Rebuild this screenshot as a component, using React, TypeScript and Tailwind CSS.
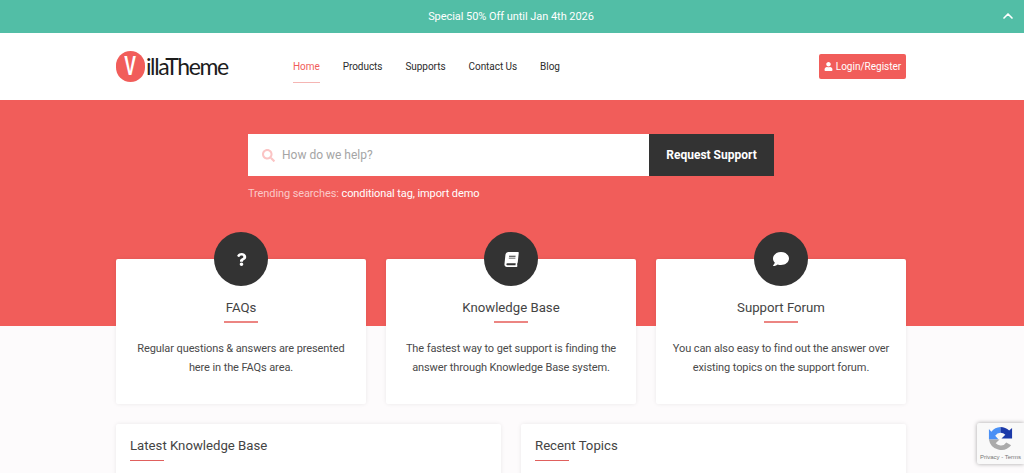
import React from 'react'
import { ChevronUp } from 'lucide-react'
import { FaBook, FaComment, FaQuestion, FaSearch, FaUser } from 'react-icons/fa'

const navItems = ['Home', 'Products', 'Supports', 'Contact Us', 'Blog']

const supportCards = [
  {
    title: 'FAQs',
    icon: <FaQuestion className="h-[13px] w-[13px]" />,
    lines: ['Regular questions & answers are presented', 'here in the FAQs area.'],
  },
  {
    title: 'Knowledge Base',
    icon: <FaBook className="h-[15px] w-[15px] -skew-x-6" />,
    lines: ['The fastest way to get support is finding the', 'answer through Knowledge Base system.'],
  },
  {
    title: 'Support Forum',
    icon: <FaComment className="h-[16px] w-[16px]" />,
    lines: ['You can also easy to find out the answer over', 'existing topics on the support forum.'],
  },
]

function App() {
  return (
    <div className="relative h-[473px] overflow-hidden bg-[#fdfbfc] font-['Roboto',sans-serif] text-[#3a3a3a]">
      <div className="relative flex h-[33px] items-center justify-center bg-[#52bea6] pr-[2px] pt-px text-[11px] tracking-[-0.05px] text-white">
        <span>Special 50% Off until Jan 4th 2026</span>
        <ChevronUp strokeWidth={2.5} className="absolute right-[8px] top-[8px] h-[16px] w-[16px]" />
      </div>

      <header className="flex h-[67px] items-center bg-white pl-[116px] pr-[118px]">
        <div className="flex w-[177px] items-center">
          <div className="flex h-[31px] w-[29px] items-center justify-center rounded-full bg-[#f15d5a] font-['Liberation_Sans',sans-serif] text-[27px] font-bold text-white">
            <span className="scale-x-[0.65]">V</span>
          </div>
          <span className="ml-px font-['Lato',sans-serif] text-[23px] leading-none font-normal tracking-[-1.4px] text-[#1c1c1c]">
            illaTheme
          </span>
        </div>
        <nav className="flex items-center gap-[23px] text-[10px] tracking-[-0.05px]">
          {navItems.map((item, i) => (
            <a
              key={item}
              className={
                i === 0
                  ? 'flex h-[33px] items-center border-b border-[#f5b5b3] pt-px text-[#f15d5a]'
                  : 'flex h-[33px] items-center border-b border-transparent pt-px text-[#2c2c2c]'
              }
            >
              {item}
            </a>
          ))}
        </nav>
        <button className="ml-auto flex h-[25px] w-[87px] items-center justify-center gap-[3px] rounded-[2px] bg-[#f15d5a] text-[10px] text-white">
          <FaUser className="h-[9px] w-[9px]" />
          Login/Register
        </button>
      </header>

      <section className="h-[226px] bg-[#f15d5a] pt-[34px]">
        <div className="ml-[248px] w-[526px]">
          <div className="flex h-[42px]">
            <div className="flex flex-1 items-center gap-[7px] bg-white pl-[14px] text-[12px] text-[#a5a5a5]">
              <FaSearch className="h-[13px] w-[13px] text-[#fbc4c4]" />
              How do we help?
            </div>
            <button className="w-[125px] bg-[#333333] text-[12px] font-bold text-white">Request Support</button>
          </div>
          <p className="mt-[10px] text-[11px] leading-[16px] tracking-[-0.1px] text-[#fbc9c8]">
            Trending searches: <span className="text-white">conditional tag, import demo</span>
          </p>
        </div>
      </section>

      <div className="-mt-[67px] grid grid-cols-3 gap-5 pl-[116px] pr-[118px]">
        {supportCards.map((card) => (
          <div
            key={card.title}
            className="relative flex h-[145px] flex-col items-center rounded-[2px] bg-white pt-[38px] text-center shadow-[0_0_4px_rgba(0,0,0,0.08)]"
          >
            <div className="absolute -top-[27px] flex h-[54px] w-[54px] items-center justify-center rounded-full bg-[#333333] text-white">
              {card.icon}
            </div>
            <h3 className="text-[13.2px] leading-[22px] text-[#444444]">{card.title}</h3>
            <div className="mt-[2px] h-[2px] w-[34px] bg-[#ec8582]" />
            <div className="mt-[16px] text-[11px] leading-[19px] tracking-[-0.1px] text-[#4a4a4a]">
              {card.lines.map((line) => (
                <p key={line}>{line}</p>
              ))}
            </div>
          </div>
        ))}
      </div>

      <div className="mt-5 grid grid-cols-2 gap-5 pl-[116px] pr-[118px]">
        {['Latest Knowledge Base', 'Recent Topics'].map((title) => (
          <div key={title} className="h-[80px] rounded-[2px] bg-white pl-[14px] pt-[12px] shadow-[0_0_4px_rgba(0,0,0,0.08)]">
            <h3 className="text-[13.2px] leading-[20px] text-[#444444]">{title}</h3>
            <div className="mt-[4px] h-px w-[34px] bg-[#e0605d]" />
          </div>
        ))}
      </div>

      <div className="absolute left-[977px] top-[423px] flex h-[41px] w-[47px] flex-col items-center rounded-l-[2px] bg-[#f9f9f9] pt-[3px] shadow-[0_0_4px_rgba(0,0,0,0.35)]">
        <svg viewBox="0 0 28 28" className="h-[27px] w-[27px]">
          <path d="M14 1V7a7 7 0 0 0-5.5 3L12 14H2V3l2.5 3A13 13 0 0 1 14 1z" fill="#4a90f5" />
          <path d="M14 1a13 13 0 0 1 9 3.7L26 2V13H15l4-4a7 7 0 0 0-5-2z" fill="#1c3aa9" />
          <path d="M2 14H13L9 18a7 7 0 0 0 11-1l5 3A13 13 0 0 1 2 14z" fill="#ababab" />
        </svg>
        <span className="font-['Liberation_Sans',sans-serif] text-[6px] leading-[8px] text-[#777777]">Privacy - Terms</span>
      </div>
    </div>
  )
}

export default App
